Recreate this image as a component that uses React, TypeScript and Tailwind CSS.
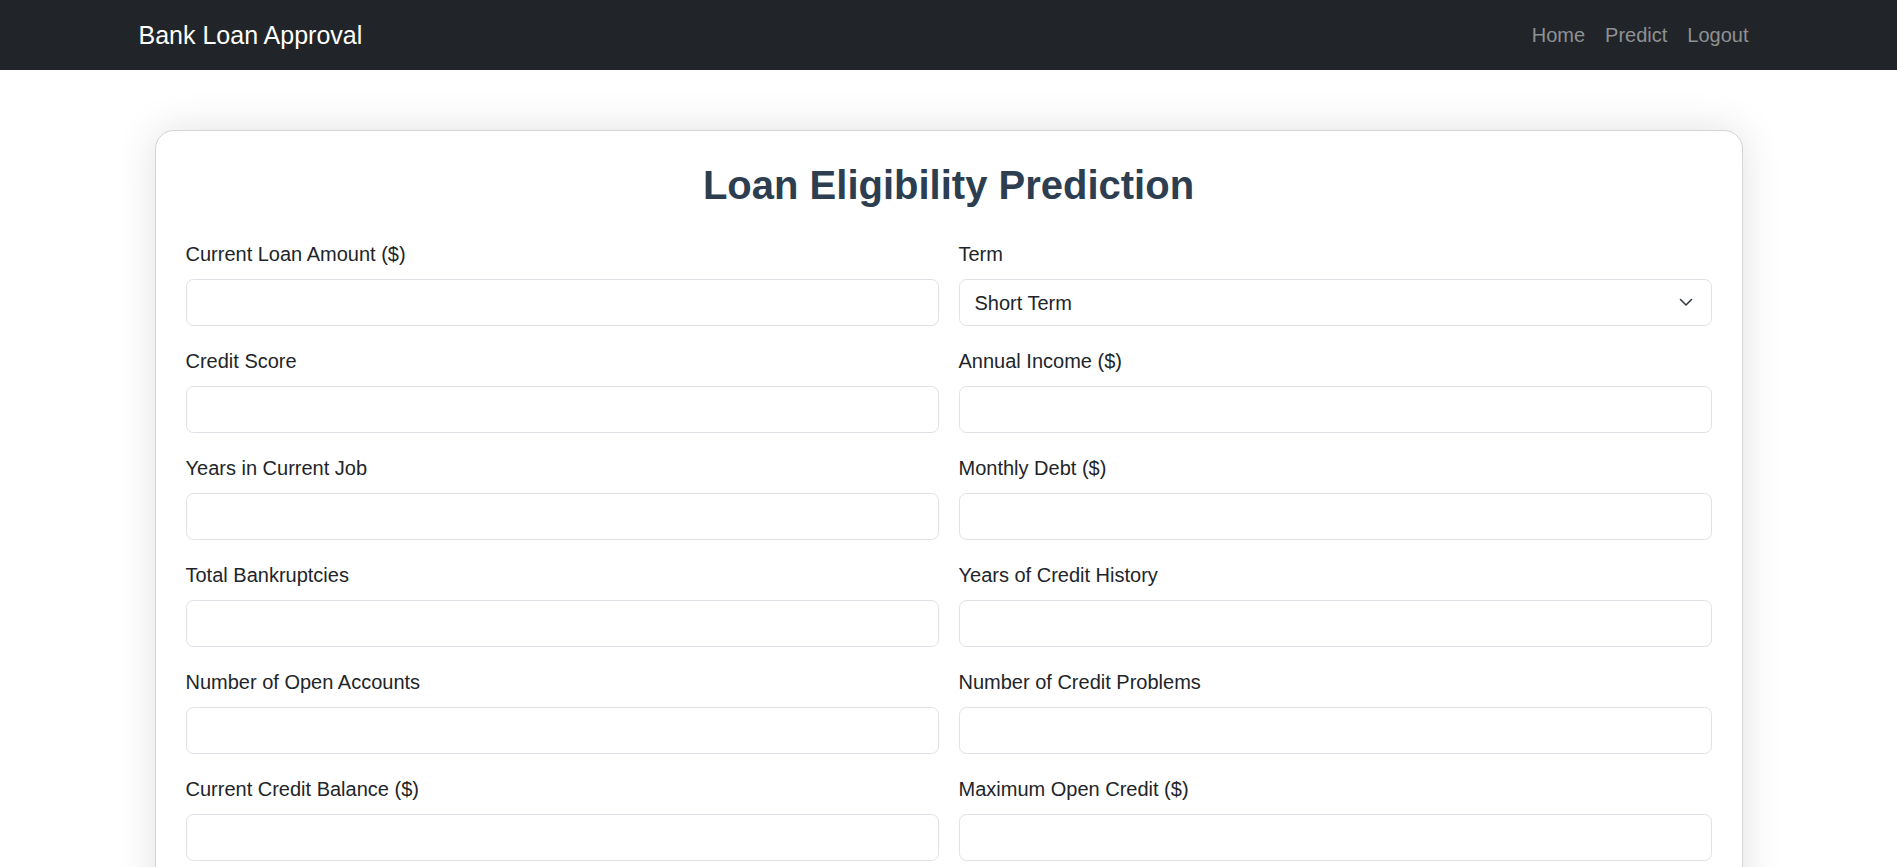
import { useState } from 'react';

const fields: { label: string; name: string; type?: 'select' }[] = [
  { label: 'Current Loan Amount ($)', name: 'loan_amount' },
  { label: 'Term', name: 'term', type: 'select' },
  { label: 'Credit Score', name: 'credit_score' },
  { label: 'Annual Income ($)', name: 'annual_income' },
  { label: 'Years in Current Job', name: 'years_job' },
  { label: 'Monthly Debt ($)', name: 'monthly_debt' },
  { label: 'Total Bankruptcies', name: 'bankruptcies' },
  { label: 'Years of Credit History', name: 'credit_history' },
  { label: 'Number of Open Accounts', name: 'open_accounts' },
  { label: 'Number of Credit Problems', name: 'credit_problems' },
  { label: 'Current Credit Balance ($)', name: 'credit_balance' },
  { label: 'Maximum Open Credit ($)', name: 'max_open_credit' },
];

const inputClass =
  'block w-full h-[47px] px-[15px] text-[20px] text-[#212529] bg-white border border-[#dee2e6] rounded-[7.5px] outline-none';

export default function App() {
  const [term, setTerm] = useState('short');

  return (
    <div className="min-h-screen bg-white text-[#212529]" style={{ fontFamily: '"Liberation Sans", Arial, sans-serif' }}>
      <nav className="bg-[#212529] h-[70px] flex items-center">
        <div className="w-[1650px] mx-auto px-[15px] flex items-center justify-between">
          <a className="text-white text-[25px] leading-[37px]">Bank Loan Approval</a>
          <ul className="flex items-center">
            {['Home', 'Predict', 'Logout'].map((item) => (
              <li key={item}>
                <a className="block px-[10px] py-[10px] text-[20px] leading-[30px] text-[#8f9193]">{item}</a>
              </li>
            ))}
          </ul>
        </div>
      </nav>

      <main className="w-[1588px] mx-auto mt-[60px] mb-[60px] bg-white border border-[#d4d4d4] rounded-[19px] shadow-[0_0_40px_rgba(0,0,0,0.12)] p-[30px]">
        <h2 className="text-center text-[40px] leading-[48px] font-bold text-[#2c3e50] mb-[30px]">
          Loan Eligibility Prediction
        </h2>
        <form className="grid grid-cols-2 gap-x-[20px]">
          {fields.map((f) => (
            <div key={f.name} className="mb-[20px]">
              <label className="block text-[20px] leading-[30px] mb-[10px]">{f.label}</label>
              {f.type === 'select' ? (
                <div className="relative">
                  <select
                    value={term}
                    onChange={(e) => setTerm(e.target.value)}
                    className={inputClass + ' appearance-none pr-[50px]'}
                  >
                    <option value="short">Short Term</option>
                    <option value="long">Long Term</option>
                  </select>
                  <svg
                    className="absolute right-[19px] top-[19px] pointer-events-none"
                    width="14"
                    height="9"
                    viewBox="0 0 14 9"
                    fill="none"
                  >
                    <path d="M1.5 1.5 7 7l5.5-5.5" stroke="#343a40" strokeWidth="1.6" strokeLinecap="round" strokeLinejoin="round" />
                  </svg>
                </div>
              ) : (
                <input type="number" className={inputClass} />
              )}
            </div>
          ))}
        </form>
      </main>
    </div>
  );
}
